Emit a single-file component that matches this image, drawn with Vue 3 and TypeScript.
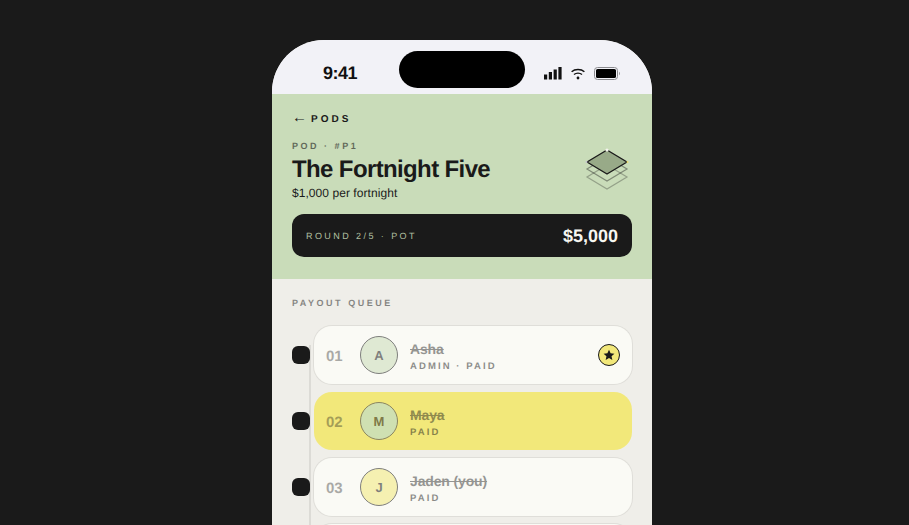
<template>
  <div class="stage">
    <div class="phone">
      <div class="status-bar">
        <span class="clock">9:41</span>
        <div class="island"></div>
        <div class="status-icons">
          <svg width="18" height="13" viewBox="0 0 18 13">
            <rect x="0" y="7.500" width="3.200" height="5" fill="#111" />
            <rect x="4.800" y="5" width="3.200" height="7.500" fill="#111" />
            <rect x="9.600" y="2.500" width="3.200" height="10" fill="#111" />
            <rect x="14.400" y="0" width="3.200" height="12.500" fill="#111" />
          </svg>
          <svg width="14" height="12" viewBox="0 0 14 12" fill="none" stroke="#111" stroke-width="1.400">
            <path d="M0.600 3.800C4 0.800 10 0.800 13.400 3.800" />
            <path d="M3 6.500C5.200 4.700 8.800 4.700 11 6.500" />
            <circle cx="7" cy="10" r="1.400" fill="#111" stroke="none" />
          </svg>
          <svg width="26" height="13" viewBox="0 0 26 13" fill="none">
            <rect x="0.500" y="0.500" width="23" height="12" rx="3" stroke="#8a8a8e" />
            <rect x="2" y="2" width="20" height="9" rx="1.600" fill="#000" />
            <path d="M25 4.800C25.700 5.100 26 5.700 26 6.500S25.700 7.900 25 8.200Z" fill="#9a9a9e" />
          </svg>
        </div>
      </div>

      <header class="pod-header">
        <div class="back"><span class="arrow">←</span><span>PODS</span></div>
        <div class="title-row">
          <div class="title-text">
            <div class="eyebrow">POD · #P1</div>
            <h1>The Fortnight Five</h1>
            <p>$1,000 per fortnight</p>
          </div>
          <svg class="stack" width="44" height="42" viewBox="0 0 44 42" fill="none">
            <path d="M22 17L42 29L22 41L2 29Z" stroke="#1a1a1a" stroke-opacity=".3" stroke-width="1.200" />
            <path d="M22 9L42 21L22 33L2 21Z" stroke="#1a1a1a" stroke-opacity=".42" stroke-width="1.200" />
            <path d="M22 2L42 14L22 26L2 14Z" fill="#98aa88" stroke="#1a1a1a" stroke-width="1.400" stroke-linejoin="round" />
            <circle cx="22" cy="2" r="1.600" fill="#f4f4ee" />
            <circle cx="1.500" cy="14" r="1" fill="#c8c8d0" />
            <circle cx="42.500" cy="14" r="1" fill="#f0e070" />
          </svg>
        </div>
        <div class="pot">
          <span class="pot-label">ROUND 2/5 · POT</span>
          <span class="pot-value">$5,000</span>
        </div>
      </header>

      <section class="queue">
        <div class="queue-title">PAYOUT QUEUE</div>
        <div class="queue-list">
          <div class="rail"></div>
          <div v-for="m in members" :key="m.num" class="row">
            <div class="dot"></div>
            <div :class="['card', { current: m.current }]">
              <span class="num">{{ m.num }}</span>
              <span :class="['avatar', m.tone]">{{ m.initial }}</span>
              <div class="info">
                <div class="name">{{ m.name }}</div>
                <div class="meta">{{ m.meta }}</div>
              </div>
              <span v-if="m.admin" class="badge">
                <svg width="12" height="12" viewBox="0 0 24 24"><path d="M12 1.500l3.200 7 7.600.8-5.700 5.100 1.600 7.500L12 18l-6.700 3.900 1.600-7.500L1.200 9.300l7.600-.8z" fill="#1a1a1a" /></svg>
              </span>
            </div>
          </div>
          <!-- next row is only just in view under the fold -->
          <div class="row">
            <div class="dot"></div>
            <div class="card"></div>
          </div>
        </div>
      </section>
    </div>
  </div>
</template>

<script setup lang="ts">
interface Member {
  num: string
  initial: string
  name: string
  meta: string
  tone: 'green' | 'yellow'
  admin?: boolean
  current?: boolean
}

const members: Member[] = [
  { num: '01', initial: 'A', name: 'Asha', meta: 'ADMIN · PAID', tone: 'green', admin: true },
  { num: '02', initial: 'M', name: 'Maya', meta: 'PAID', tone: 'green', current: true },
  { num: '03', initial: 'J', name: 'Jaden (you)', meta: 'PAID', tone: 'yellow' }
]
</script>

<style>
html, body {
  margin: 0;
  height: 100%;
  overflow: hidden;
  background: #1a1a1a;
}
</style>

<style scoped>
.stage {
  height: 525px;
  padding: 40px 0 0 272px;
  box-sizing: border-box;
  overflow: hidden;
  display: flex;
  font-family: "Liberation Sans", Arial, sans-serif;
  text-rendering: geometricPrecision;
  color: #1a1a1a;
}

.phone {
  width: 380px;
  height: 780px;
  flex-shrink: 0;
  border-radius: 52px;
  overflow: hidden;
  background: #efeee9;
}

.status-bar {
  height: 54px;
  background: #f2f2f7;
  position: relative;
  display: flex;
  align-items: center;
  justify-content: space-between;
  padding: 13px 32px 0 51px;
  box-sizing: border-box;
}

.clock {
  font-size: 18px;
  font-weight: 700;
  letter-spacing: -0.03em;
  color: #111;
}

.island {
  position: absolute;
  left: 127px;
  top: 11px;
  width: 126px;
  height: 37px;
  border-radius: 19px;
  background: #000;
}

.status-icons {
  display: flex;
  align-items: center;
  gap: 9px;
}

.pod-header {
  height: 185px;
  box-sizing: border-box;
  background: #c9dcb9;
  padding: 17px 20px 0;
}

.back {
  display: flex;
  align-items: center;
  gap: 6px;
  font-size: 10px;
  font-weight: 700;
  letter-spacing: 0.3em;
  height: 16px;
}

.arrow {
  font-size: 15px;
  letter-spacing: 0;
  font-weight: 400;
  width: 13px;
  margin-bottom: 3px;
}

.title-row {
  display: flex;
  justify-content: space-between;
  margin-top: 13px;
}

.eyebrow {
  font-size: 9px;
  font-weight: 700;
  letter-spacing: 0.28em;
  color: #1a1a1a;
  opacity: 0.6;
  line-height: 12px;
}

h1 {
  margin: 3px 0 0;
  font-size: 24px;
  line-height: 30px;
  font-weight: 700;
  letter-spacing: -0.026em;
}

.title-text p {
  margin: 1px 0 0;
  font-size: 12px;
  line-height: 15px;
  letter-spacing: 0.005em;
}

.stack {
  margin-top: 8px;
  margin-right: 3px;
}

.pot {
  margin-top: 13px;
  height: 43px;
  border-radius: 12px;
  background: #1a1a1a;
  display: flex;
  align-items: center;
  justify-content: space-between;
  padding: 0 14px;
}

.pot-label {
  font-size: 9px;
  letter-spacing: 0.27em;
  color: #c9dcb9;
  opacity: 0.85;
}

.pot-value {
  padding-top: 2px;
  font-size: 18px;
  font-weight: 700;
  color: #f6f6f0;
}

.queue {
  padding: 18px 20px 0;
}

.queue-title {
  font-size: 9px;
  line-height: 12px;
  font-weight: 700;
  letter-spacing: 0.28em;
  color: #1a1a1a;
  opacity: 0.5;
}

.queue-list {
  position: relative;
  margin-top: 17px;
  display: flex;
  flex-direction: column;
  gap: 8px;
}

.rail {
  position: absolute;
  left: 17px;
  top: 19px;
  height: 400px;
  width: 2px;
  background: #dcdbd6;
}

.row {
  position: relative;
  display: flex;
  align-items: center;
  gap: 4px;
}

.dot {
  width: 18px;
  height: 18px;
  border-radius: 6px;
  background: #1a1a1a;
  flex-shrink: 0;
}

.card {
  flex: 1;
  height: 58px;
  box-sizing: border-box;
  display: flex;
  align-items: center;
  padding: 0 12px;
  background: #fafaf5;
  box-shadow: 0 0 0 1px #dfded9;
  border-radius: 18px;
}

.card.current {
  background: #f2e87a;
  box-shadow: none;
}

.num {
  width: 34px;
  padding-top: 3px;
  font-size: 15px;
  font-weight: 700;
  letter-spacing: -0.01em;
  color: #1a1a1a;
  opacity: 0.36;
}

.avatar {
  width: 38px;
  height: 38px;
  box-sizing: border-box;
  border-radius: 50%;
  border: 1px solid #1a1a1a;
  display: flex;
  align-items: center;
  justify-content: center;
  font-size: 13px;
  font-weight: 700;
  flex-shrink: 0;
  opacity: 0.55;
}

.avatar.green {
  background: #c9dcb9;
}

.avatar.yellow {
  background: #f2e87a;
}

.card.current .avatar {
  opacity: 1;
  background: #cfe0b2;
  border-color: #8a8560;
  color: #7f7a48;
}

.info {
  margin-left: 12px;
  padding-top: 3px;
  flex: 1;
  min-width: 0;
}

.name {
  font-size: 14px;
  line-height: 17px;
  font-weight: 700;
  letter-spacing: -0.01em;
  text-decoration: line-through;
  color: #1a1a1a;
  opacity: 0.45;
}

.meta {
  margin-top: 3px;
  font-size: 9.500px;
  line-height: 12px;
  font-weight: 700;
  letter-spacing: 0.22em;
  color: #1a1a1a;
  opacity: 0.5;
}

.badge {
  width: 22px;
  height: 22px;
  box-sizing: border-box;
  border-radius: 50%;
  border: 1px solid #1a1a1a;
  background: #f2e87a;
  display: flex;
  align-items: center;
  justify-content: center;
}
</style>
